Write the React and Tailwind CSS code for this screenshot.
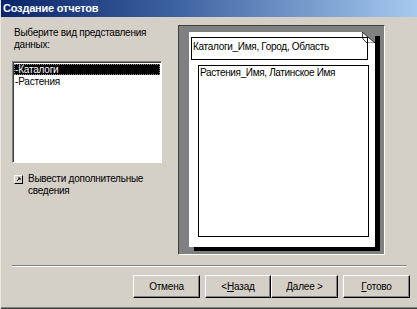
import React from "react";

const font = { fontFamily: '"Liberation Sans", Arial, sans-serif' };

function Btn({ children, className = "" }) {
  return (
    <div
      className={
        "h-[23px] flex items-center justify-center text-[10px] tracking-[-0.2px] text-black border-t border-l border-t-white border-l-white border-r border-b border-r-black border-b-black shadow-[inset_-1px_-1px_0_#808080] " +
        className
      }
    >
      {children}
    </div>
  );
}

export default function App() {
  return (
    <div
      className="w-[417px] h-[309px] bg-[#d4d0c8] flex flex-col overflow-hidden border-l border-l-[#e8e6e0] text-black"
      style={font}
    >
      {/* Title bar */}
      <div className="h-[17px] bg-[linear-gradient(to_right,#0a246a,#3a5f9e_40%,#a6caf0)] flex items-center pl-[2px]">
        <span className="text-white font-bold text-[11px] leading-none tracking-[-0.2px]">
          Создание отчетов
        </span>
      </div>

      {/* Main */}
      <div className="flex items-start">
        {/* Left column */}
        <div className="ml-[11px] mt-[10px] w-[150px] flex flex-col">
          <div className="pl-[2px] text-[10px] tracking-[-0.25px] leading-[12px] whitespace-nowrap">
            Выберите вид представления
            <br />
            данных:
          </div>
          <div className="mt-[10px] h-[102px] bg-white border border-t-[#808080] border-l-[#808080] border-b-white border-r-white shadow-[inset_1px_1px_0_#404040] pt-[2px] pl-[1px] pr-[1px]">
            <div className="h-[11px] bg-black text-white text-[10px] tracking-[-0.2px] leading-[11px] outline-1 outline-dotted outline-[#888] -outline-offset-1 pl-[1px]">
              -Каталоги
            </div>
            <div className="h-[12px] text-[10px] tracking-[-0.2px] leading-[13px] pl-[1px]">-Растения</div>
          </div>
          <div className="mt-[10px] flex items-start">
            <div className="ml-[2px] mt-[2px] w-[9px] h-[9px] bg-[#d4d0c8] border-t border-l border-t-white border-l-white border-r border-b border-r-black border-b-black flex items-center justify-center">
              <svg width="5" height="5" viewBox="0 0 5 5">
                <path d="M1 4 L4 1 M2 1 H4 V3" stroke="black" strokeWidth="1" fill="none" />
              </svg>
            </div>
            <div className="ml-[5px] text-[10px] tracking-[-0.25px] leading-[12px] whitespace-nowrap">
              Вывести дополнительные
              <br />
              сведения
            </div>
          </div>
        </div>

        {/* Preview */}
        <div className="ml-[16px] mt-[8px] w-[207px] h-[230px] bg-[#808080] border border-t-[#404040] border-l-[#404040] border-b-white border-r-white pl-[10px] pt-[6px]">
          <div className="relative w-[186px] h-[215px] bg-white shadow-[5px_4px_0_0_#000]">
            {/* folded corner */}
            <svg className="absolute right-0 top-0" width="13" height="11" viewBox="0 0 13 11">
              <polygon points="0,0 13,0 13,11" fill="#808080" />
              <polygon points="0,0 13,11 5,11 1,7" fill="#ffffff" stroke="#000" strokeWidth="0.8" />
            </svg>
            <div className="absolute left-[2px] top-[5px] w-[177px] h-[23px] border border-black text-[10px] tracking-[-0.3px] leading-none pt-[4px] pl-[1px] whitespace-nowrap">
              Каталоги_Имя, Город, Область
            </div>
            <div className="absolute left-[9px] top-[33px] w-[171px] h-[172px] border border-black text-[10px] tracking-[-0.35px] leading-none pt-[2px] pl-[1px] whitespace-nowrap">
              Растения_Имя, Латинское Имя
            </div>
          </div>
        </div>
      </div>

      {/* Separator */}
      <div className="mt-[10px] ml-[11px] w-[395px] h-[2px] border-t border-t-[#808080] border-b border-b-white" />

      {/* Buttons */}
      <div className="mt-[8px] flex">
        <Btn className="ml-[132px] w-[67px]">Отмена</Btn>
        <Btn className="ml-[5px] w-[66px]">
          &lt; <span className="underline">Н</span>азад
        </Btn>
        <Btn className="ml-[0px] w-[67px]">
          <span className="underline">Д</span>алее &gt;
        </Btn>
        <Btn className="ml-[5px] w-[67px]">
          <span className="underline">Г</span>отово
        </Btn>
      </div>

      <div className="mt-auto h-[2px] border-t border-t-[#808080] border-b border-b-[#404040]" />
    </div>
  );
}
